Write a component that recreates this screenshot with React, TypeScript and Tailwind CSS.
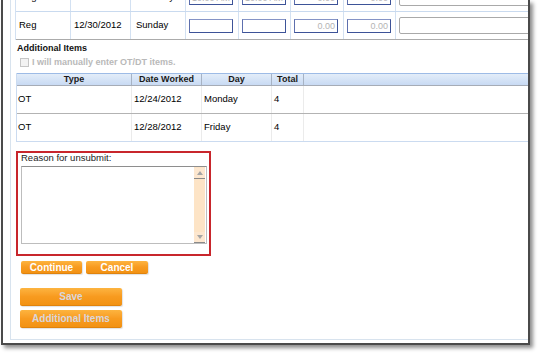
import React from "react";

function TInput({ text, w = 44 }: { text?: string; w?: number }) {
  return (
    <div
      className="h-[14px] border border-[#3d5398] border-t-[#8594c6] border-l-[#5d6fae] text-right text-[#b4b4b4] pr-[2px] text-[9px] leading-[12px] bg-white overflow-hidden whitespace-nowrap"
      style={{ width: w }}
    >
      {text}
    </div>
  );
}

function TopRow({
  type,
  date,
  day,
  a,
  b,
  c,
  d,
  last,
}: {
  type: string;
  date: string;
  day: string;
  a: string;
  b: string;
  c: string;
  d: string;
  last?: boolean;
}) {
  return (
    <div
      className={`flex h-[28px] border-b ${last ? "border-[#ababab]" : "border-[#c9daef]"}`}
    >
      <div className="w-[55px] shrink-0 border-r border-[#d3e1f2] flex items-center pl-[3px]">{type}</div>
      <div className="w-[60px] shrink-0 border-r border-[#d3e1f2] flex items-center pl-[3px]">{date}</div>
      <div className="w-[55px] shrink-0 border-r border-[#d3e1f2] flex items-center pl-[5px]">{day}</div>
      <div className="w-[53px] shrink-0 border-r border-[#d3e1f2] flex items-center pl-[3px]">
        <TInput text={a} />
      </div>
      <div className="w-[52px] shrink-0 border-r border-[#d3e1f2] flex items-center pl-[3px]">
        <TInput text={b} />
      </div>
      <div className="w-[53px] shrink-0 border-r border-[#d3e1f2] flex items-center pl-[3px]">
        <TInput text={c} />
      </div>
      <div className="w-[52px] shrink-0 border-r border-[#d3e1f2] flex items-center pl-[3px]">
        <TInput text={d} />
      </div>
      <div className="flex-1 flex items-center pl-[3px]">
        <div className="w-[200px] h-[17px] shrink-0 border border-[#a9a9a9] rounded-[2px] bg-white" />
      </div>
    </div>
  );
}

function ItemRow({ t, d, day, total, last }: { t: string; d: string; day: string; total: string; last?: boolean }) {
  return (
    <div className={`flex h-[28px] border-b ${last ? "border-[#cbdbf0]" : "border-[#b3b3b3]"}`}>
      <div className="w-[115px] shrink-0 border-r border-[#ebebeb] flex items-center pl-[1px]">{t}</div>
      <div className="w-[70px] shrink-0 border-r border-[#ebebeb] flex items-center pl-[2px]">{d}</div>
      <div className="w-[70px] shrink-0 border-r border-[#ebebeb] flex items-center pl-[2px]">{day}</div>
      <div className="w-[32px] shrink-0 border-r border-[#ebebeb] flex items-center pl-[2px]">{total}</div>
      <div className="flex-1" />
    </div>
  );
}

function OrangeButton({
  label,
  className,
  dim,
}: {
  label: string;
  className: string;
  dim?: boolean;
}) {
  return (
    <div
      className={`${className} shrink-0 rounded-[2px] bg-gradient-to-b from-[#fdb43f] via-[#f89b1f] to-[#f29213] border-b border-[#e0830c] shadow-[1px_1px_1px_rgba(0,0,0,0.12)] flex items-center justify-center font-bold text-[10px] ${
        dim ? "text-[#d8d6dc]" : "text-white"
      }`}
    >
      {label}
    </div>
  );
}

export default function App() {
  return (
    <div className="w-[540px] h-[356px] bg-white overflow-hidden font-['Liberation_Sans',Arial,sans-serif] text-[9.5px] text-black">
      <div className="ml-[1px] w-[529px] h-[345px] border-l-2 border-r-2 border-b-2 border-[#4a4a4a] shadow-[3px_3px_4px_rgba(0,0,0,0.45)] overflow-hidden bg-white">
        <div className="ml-[7px] h-[340px] border-l border-b border-[#d8e3ee] flex flex-col">
          {/* top rows */}
          <div className="-mt-[16px] ml-[4px] border-l border-[#d3e1f2] flex flex-col">
            <TopRow type="Reg" date="12/29/2012" day="Saturday" a="10:00 AM" b="10:00 AM" c="0.00" d="0.00" />
            <TopRow type="Reg" date="12/30/2012" day="Sunday" a="" b="" c="0.00" d="0.00" last />
          </div>

          <div className="mt-[2px] pl-[6px] font-bold text-[9px] leading-[12px] text-[#111]">Additional Items</div>
          <div className="mt-[2px] pl-[9px] h-[12px] flex items-center gap-[3px]">
            <div className="w-[9px] h-[9px] border border-[#c6c6c6] bg-[#f3f3f3]" />
            <span className="font-bold text-[9px] text-[#b9b9b9] leading-[12px]">I will manually enter OT/DT items.</span>
          </div>

          {/* additional items table */}
          <div className="mt-[5px] ml-[5px] border-l border-[#cbdbf0] flex flex-col">
            <div className="flex h-[13px] border-t border-b border-t-[#9dbbe6] border-b-[#a6acb6] bg-gradient-to-b from-[#e3edf9] to-[#c8daf3] font-bold text-[9px] leading-[11px] text-[#1a1a1a]">
              <div className="w-[115px] shrink-0 border-r border-[#a7b3c4] text-center">Type</div>
              <div className="w-[70px] shrink-0 border-r border-[#a7b3c4] text-center">Date Worked</div>
              <div className="w-[70px] shrink-0 border-r border-[#a7b3c4] text-center">Day</div>
              <div className="w-[32px] shrink-0 border-r border-[#a7b3c4] text-center">Total</div>
              <div className="flex-1" />
            </div>
            <ItemRow t="OT" d="12/24/2012" day="Monday" total="4" />
            <ItemRow t="OT" d="12/28/2012" day="Friday" total="4" last />
          </div>

          {/* reason box */}
          <div className="mt-[9px] ml-[5px] w-[195px] h-[105px] border-2 border-[#c8262c] flex flex-col">
            <div className="pl-[3px] leading-[10px] text-[9.5px] text-[#222]">Reason for unsubmit:</div>
            <div className="mt-[3px] ml-[3px] w-[186px] h-[78px] border border-[#bdbdbd] border-t-[#8e8e8e] flex bg-white">
              <div className="flex-1" />
              <div className="w-[11px] mr-[1px] flex flex-col bg-[#fde4c6] bg-[radial-gradient(#f6cfa6_0.6px,transparent_0.7px)] bg-[length:2px_2px]">
                <div className="mt-[1px] h-[11px] bg-[#fde7cf] border-b border-[#8a8a8a] flex items-center justify-center">
                  <svg width="6" height="4" viewBox="0 0 6 4">
                    <path d="M0 4 L3 0 L6 4 Z" fill="#a5a5a5" />
                  </svg>
                </div>
                <div className="flex-1" />
                <div className="h-[11px] bg-[#fde7cf] border-b border-[#8a8a8a] flex items-center justify-center">
                  <svg width="6" height="4" viewBox="0 0 6 4">
                    <path d="M0 0 L3 4 L6 0 Z" fill="#a5a5a5" />
                  </svg>
                </div>
              </div>
            </div>
          </div>

          <div className="mt-[5px] ml-[10px] flex gap-[4px]">
            <OrangeButton label="Continue" className="w-[61px] h-[13px]" />
            <OrangeButton label="Cancel" className="w-[62px] h-[13px]" />
          </div>

          <div className="mt-[14px] ml-[9px] flex flex-col gap-[4px]">
            <OrangeButton label="Save" className="w-[102px] h-[18px]" dim />
            <OrangeButton label="Additional Items" className="w-[102px] h-[18px]" dim />
          </div>
        </div>
      </div>
    </div>
  );
}
